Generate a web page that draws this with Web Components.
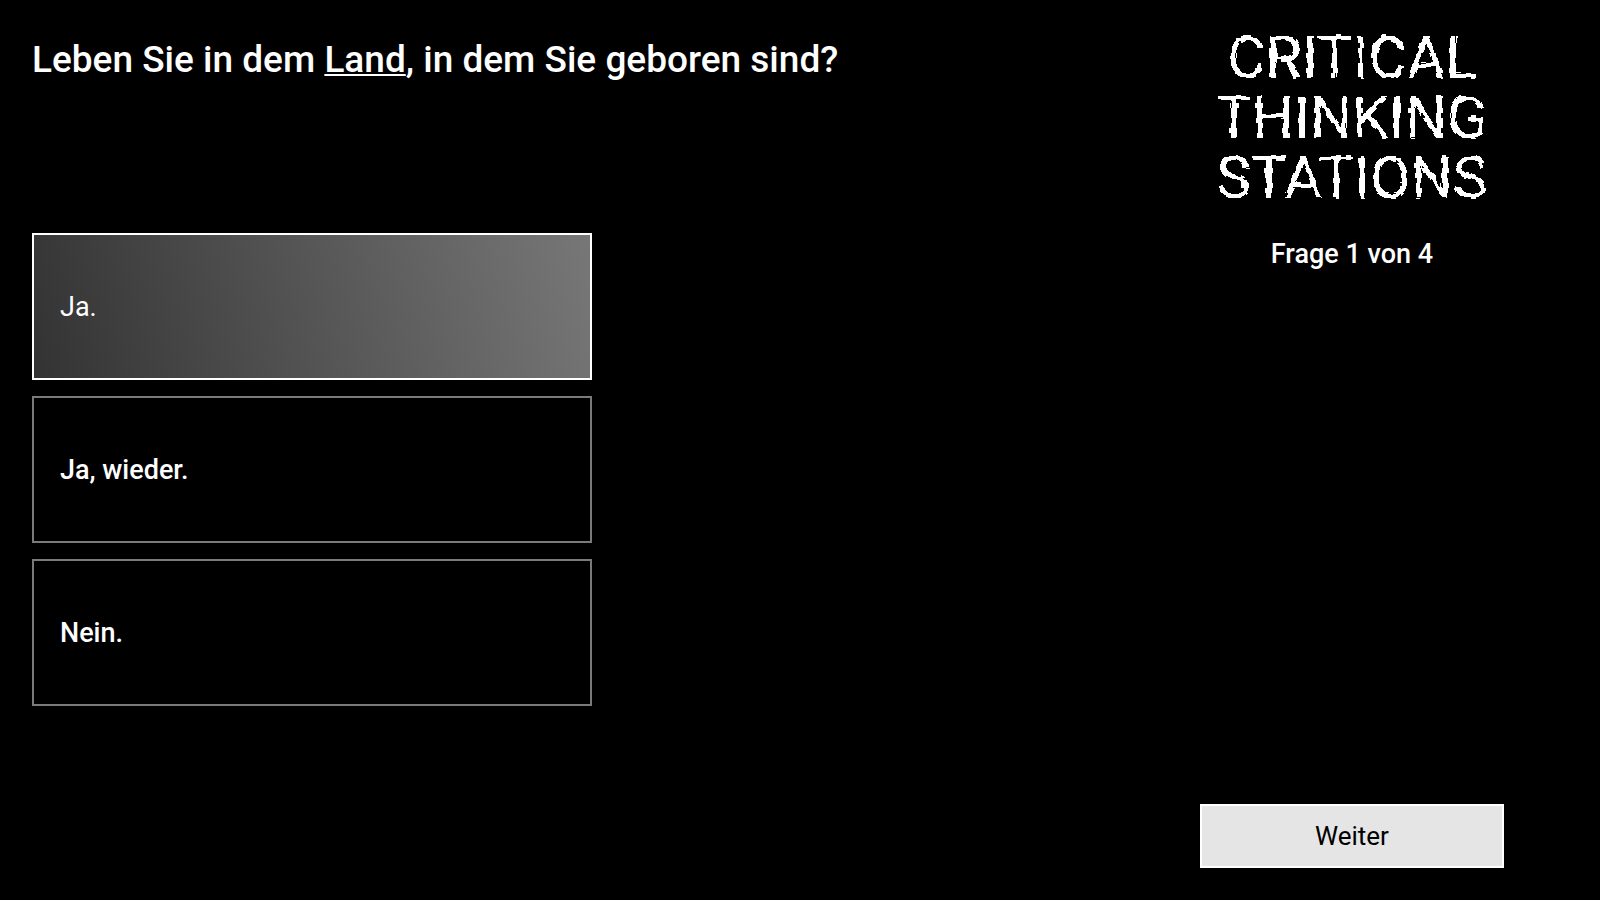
<!DOCTYPE html>
<html lang="de">
<head>
<meta charset="utf-8">
<meta name="viewport" content="width=device-width, initial-scale=1">
<title>Critical Thinking Stations</title>
<style>
  html { background: #000; }
  body { margin: 0; background: #000; color: #fff; font-family: Roboto, "Liberation Sans", sans-serif; }
</style>
</head>
<body>
<quiz-page>
  <quiz-question slot="question">Leben Sie in dem <a href="#land">Land</a>, in dem Sie geboren sind?</quiz-question>
  <quiz-answers slot="answers"></quiz-answers>
  <quiz-logo slot="logo"></quiz-logo>
  <quiz-progress slot="progress">Frage 1 von 4</quiz-progress>
  <quiz-button slot="action">Weiter</quiz-button>
</quiz-page>
<script>
  const define = (name, html) => customElements.define(name, class extends HTMLElement {
    constructor() {
      super();
      this.attachShadow({ mode: "open" }).innerHTML = html;
    }
  });

  define("quiz-page", `
    <style>
      :host { display: grid; grid-template-columns: 1fr 25vw; min-height: 100vh; box-sizing: border-box; padding: 28px 48px 32px 32px; }
      main { display: flex; flex-direction: column; padding-top: 4px; }
      header { min-height: 201px; }
      .answers { width: 50%; min-width: 320px; }
      aside { display: flex; flex-direction: column; align-items: center; }
      footer { margin-top: auto; width: 76%; }
    </style>
    <main>
      <header><slot name="question"></slot></header>
      <div class="answers"><slot name="answers"></slot></div>
    </main>
    <aside>
      <slot name="logo"></slot>
      <slot name="progress"></slot>
      <footer><slot name="action"></slot></footer>
    </aside>`);

  define("quiz-question", `
    <style>
      :host { display: block; }
      h1 { margin: 0; font-size: 37px; line-height: 56px; font-weight: 500; }
      ::slotted(a) { color: inherit; text-decoration: underline; text-decoration-thickness: 2px; text-underline-offset: 2px; text-decoration-skip-ink: none; }
    </style>
    <h1><slot></slot></h1>`);

  define("quiz-answers", `
    <style>
      :host { display: block; }
      fieldset { margin: 0; padding: 0; border: 0; min-width: 0; display: grid; gap: 16px; }
      label { display: flex; align-items: center; box-sizing: border-box; min-height: 147px; padding: 0 26px; border: 2px solid #7a7a7a; font-size: 27px; font-weight: 500; cursor: pointer; }
      input { appearance: none; width: 0; height: 0; margin: 0; outline: none; }
      label:has(:checked) { border-color: #fff; background: linear-gradient(75deg, #333, #777); font-weight: 400; }
    </style>
    <fieldset aria-label="Antworten">
      <label><input type="radio" name="answer" checked>Ja.</label>
      <label><input type="radio" name="answer">Ja, wieder.</label>
      <label><input type="radio" name="answer">Nein.</label>
    </fieldset>`);

  /* The logo's strokes are cut into small blocks, each shifted by its own amount. */
  define("quiz-logo", `
    <style>
      :host { display: block; font-size: 59px; line-height: 60px; font-weight: 400; text-align: center; }
      svg { position: absolute; width: 0; height: 0; }
      div { filter: url(#blocks); }
      span { display: block; }
    </style>
    <svg aria-hidden="true">
      <filter id="blocks" x="-5%" y="-5%" width="110%" height="110%" color-interpolation-filters="sRGB">
        <feTurbulence type="fractalNoise" baseFrequency="0.15" numOctaves="2" seed="4"/>
        <feColorMatrix values="1 0 0 0 0  0 1 0 0 0  0 0 1 0 0  0 0 0 0 1" result="noise"/>
        <feFlood x="2" y="2" width="1" height="1" flood-color="#fff"/>
        <feComposite x="0" y="0" width="5" height="5"/>
        <feTile result="dots"/>
        <feComposite in="noise" in2="dots" operator="in"/>
        <feMorphology operator="dilate" radius="2" result="cells"/>
        <feDisplacementMap in="SourceGraphic" in2="cells" scale="6" xChannelSelector="R" yChannelSelector="G"/>
        <feComponentTransfer><feFuncA type="discrete" tableValues="0 0 0 1 1"/></feComponentTransfer>
      </filter>
    </svg>
    <div><span>CRITICAL</span><span>THINKING</span><span>STATIONS</span></div>`);

  define("quiz-progress", `
    <style>
      :host { display: block; margin-top: 26px; font-size: 27px; line-height: 40px; font-weight: 500; }
    </style>
    <slot></slot>`);

  define("quiz-button", `
    <style>
      :host { display: block; }
      button { display: block; width: 100%; min-height: 64px; padding: 0 16px; border: 2px solid #fff; border-radius: 0; background: #e5e5e5; color: #000; font: 400 26px Roboto, "Liberation Sans", sans-serif; cursor: pointer; }
    </style>
    <button type="button"><slot></slot></button>`);
</script>
</body>
</html>
